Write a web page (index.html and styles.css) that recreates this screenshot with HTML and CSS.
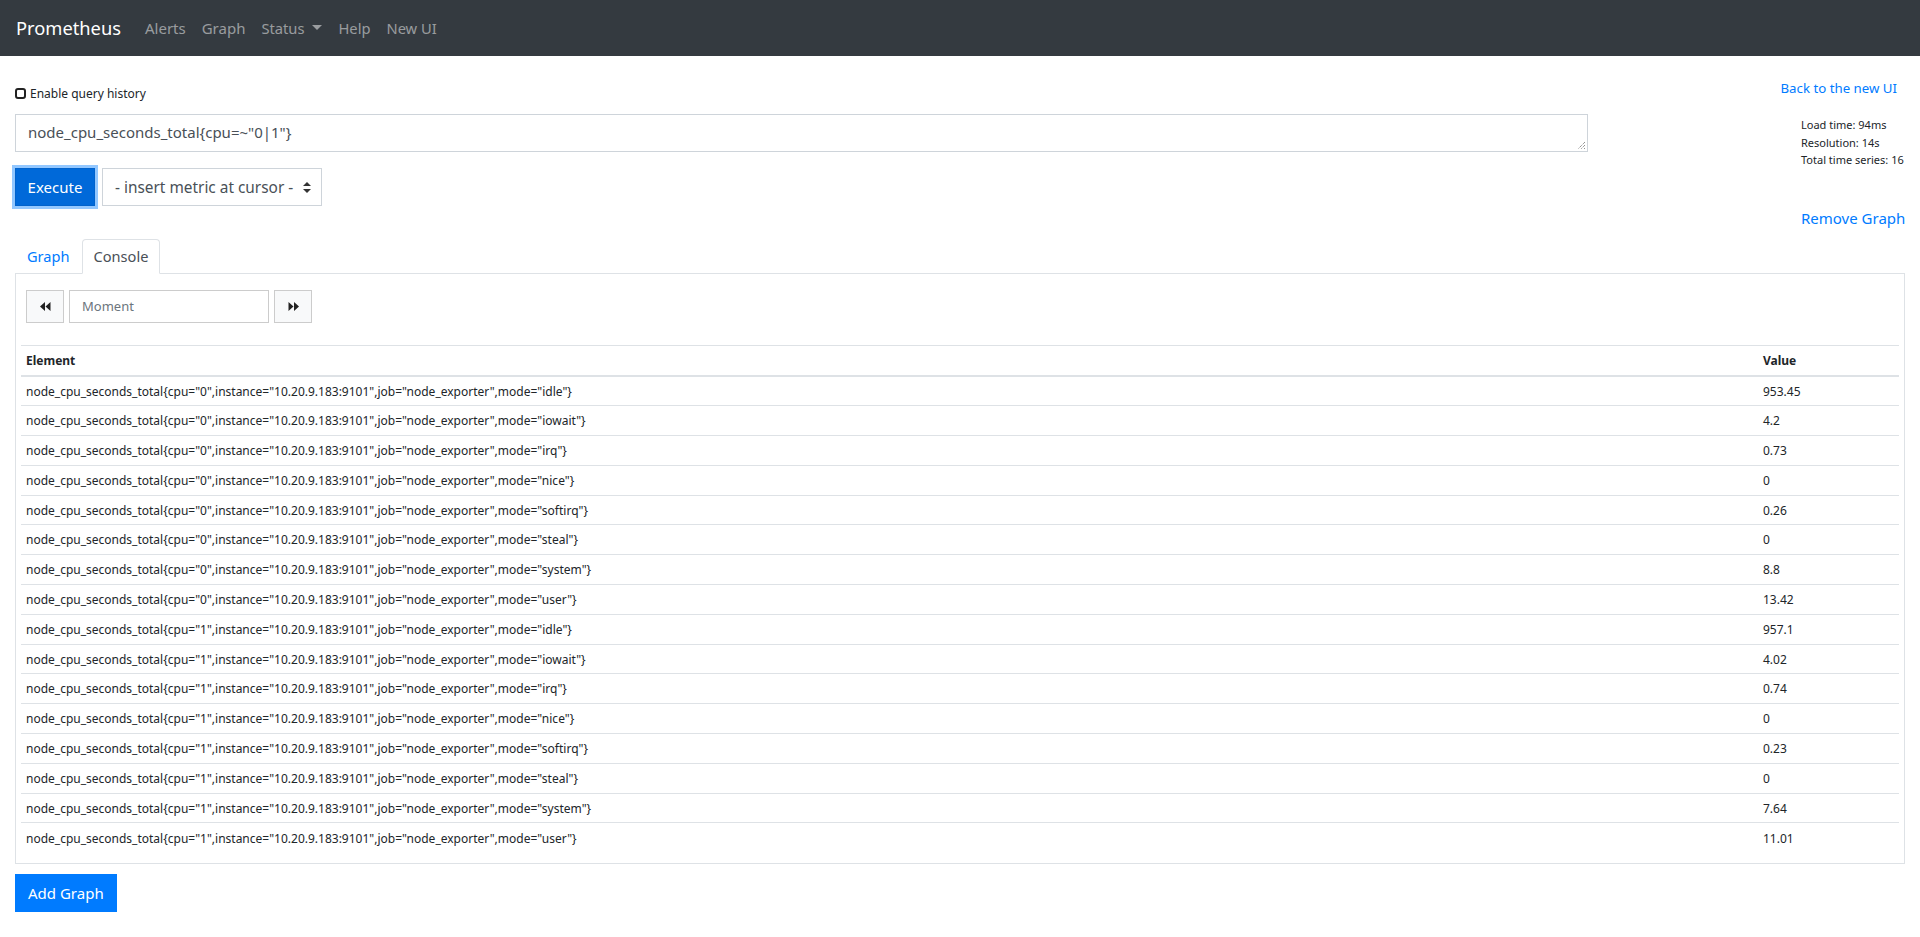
FILE: index.html
```html
<!DOCTYPE html>
<html>
<head>
<meta charset="utf-8">
<title>Prometheus Time Series Collection and Processing Server</title>
<link rel="stylesheet" href="styles.css">
</head>
<body>
<nav class="navbar">
  <a class="brand" href="#">Prometheus</a>
  <a class="nav-link" href="#">Alerts</a>
  <a class="nav-link" href="#">Graph</a>
  <a class="nav-link" href="#">Status <span class="caret"></span></a>
  <a class="nav-link" href="#">Help</a>
  <a class="nav-link" href="#">New UI</a>
</nav>

<main class="container">
  <div class="top-row">
    <div class="query-col">
      <label class="history"><span class="checkbox"></span>Enable query history</label>
      <div class="expr">node_cpu_seconds_total{cpu=~"0|1"}<svg class="grip" width="9" height="9" viewBox="0 0 9 9"><path d="M8 1 L1 8 M8 4 L4 8 M8 7 L7 8" stroke="#666" stroke-width="1" stroke-dasharray="1 1"/></svg></div>
      <div class="exec-row">
        <button class="btn-exec">Execute</button>
        <div class="metric-select"><span>- insert metric at cursor -</span><svg class="updown" width="8" height="11" viewBox="0 0 8 11"><path d="M4 0 L8 4 L0 4 Z M0 7 L8 7 L4 11 Z" fill="#333"/></svg></div>
      </div>
    </div>
    <div class="side-col">
      <a class="back-link" href="#">Back to the new UI</a>
      <div class="stats">
        <div>Load time: 94ms</div>
        <div>Resolution: 14s</div>
        <div>Total time series: 16</div>
      </div>
      <a class="remove-link" href="#">Remove Graph</a>
    </div>
  </div>

  <div class="tabs">
    <a class="tab" href="#">Graph</a>
    <a class="tab active" href="#">Console</a>
  </div>
  <div class="panel">
    <div class="moment-row">
      <button class="btn-step"><svg width="11" height="9" viewBox="0 0 11 9"><path d="M5 0 L5 9 L0 4.5 Z M10.5 0 L10.5 9 L5.5 4.5 Z" fill="#222"/></svg></button>
      <div class="moment-input">Moment</div>
      <button class="btn-step"><svg width="11" height="9" viewBox="0 0 11 9"><path d="M0.5 0 L0.5 9 L5.5 4.5 Z M6 0 L6 9 L11 4.5 Z" fill="#222"/></svg></button>
    </div>
    <table class="results">
      <thead>
        <tr><th>Element</th><th class="val">Value</th></tr>
      </thead>
      <tbody>
        <tr><td>node_cpu_seconds_total{cpu="0",instance="10.20.9.183:9101",job="node_exporter",mode="idle"}</td><td>953.45</td></tr>
        <tr><td>node_cpu_seconds_total{cpu="0",instance="10.20.9.183:9101",job="node_exporter",mode="iowait"}</td><td>4.2</td></tr>
        <tr><td>node_cpu_seconds_total{cpu="0",instance="10.20.9.183:9101",job="node_exporter",mode="irq"}</td><td>0.73</td></tr>
        <tr><td>node_cpu_seconds_total{cpu="0",instance="10.20.9.183:9101",job="node_exporter",mode="nice"}</td><td>0</td></tr>
        <tr><td>node_cpu_seconds_total{cpu="0",instance="10.20.9.183:9101",job="node_exporter",mode="softirq"}</td><td>0.26</td></tr>
        <tr><td>node_cpu_seconds_total{cpu="0",instance="10.20.9.183:9101",job="node_exporter",mode="steal"}</td><td>0</td></tr>
        <tr><td>node_cpu_seconds_total{cpu="0",instance="10.20.9.183:9101",job="node_exporter",mode="system"}</td><td>8.8</td></tr>
        <tr><td>node_cpu_seconds_total{cpu="0",instance="10.20.9.183:9101",job="node_exporter",mode="user"}</td><td>13.42</td></tr>
        <tr><td>node_cpu_seconds_total{cpu="1",instance="10.20.9.183:9101",job="node_exporter",mode="idle"}</td><td>957.1</td></tr>
        <tr><td>node_cpu_seconds_total{cpu="1",instance="10.20.9.183:9101",job="node_exporter",mode="iowait"}</td><td>4.02</td></tr>
        <tr><td>node_cpu_seconds_total{cpu="1",instance="10.20.9.183:9101",job="node_exporter",mode="irq"}</td><td>0.74</td></tr>
        <tr><td>node_cpu_seconds_total{cpu="1",instance="10.20.9.183:9101",job="node_exporter",mode="nice"}</td><td>0</td></tr>
        <tr><td>node_cpu_seconds_total{cpu="1",instance="10.20.9.183:9101",job="node_exporter",mode="softirq"}</td><td>0.23</td></tr>
        <tr><td>node_cpu_seconds_total{cpu="1",instance="10.20.9.183:9101",job="node_exporter",mode="steal"}</td><td>0</td></tr>
        <tr><td>node_cpu_seconds_total{cpu="1",instance="10.20.9.183:9101",job="node_exporter",mode="system"}</td><td>7.64</td></tr>
        <tr><td>node_cpu_seconds_total{cpu="1",instance="10.20.9.183:9101",job="node_exporter",mode="user"}</td><td>11.01</td></tr>
      </tbody>
    </table>
  </div>
  <button class="btn-add">Add Graph</button>
</main>
</body>
</html>
```

FILE: styles.css
```css
* { box-sizing: border-box; }
body {
  margin: 0;
  font-family: "Noto Sans", "Open Sans", sans-serif;
  color: #212529;
  background: #fff;
}
a { text-decoration: none; }

.navbar {
  height: 56px;
  background: #343a40;
  display: flex;
  align-items: center;
  padding: 0 16px 1px 16px;
}
.brand {
  color: #fff;
  font-size: 18.3px;
  margin-right: 16px;
}
.nav-link {
  color: rgba(255,255,255,.5);
  font-size: 15px;
  padding: 0 8px;
  display: flex;
  align-items: center;
}
.nav-link:nth-child(n+4) { font-size: 14.7px; }
.caret {
  display: inline-block;
  margin-left: 8px;
  border-top: 5px solid rgba(255,255,255,.5);
  border-left: 5px solid transparent;
  border-right: 5px solid transparent;
}

.container { padding: 0 15px; }

.top-row { display: flex; }
.query-col { flex: 1; }
.side-col {
  width: 317px;
  display: flex;
  flex-direction: column;
  align-items: flex-end;
}

.history {
  display: flex;
  align-items: center;
  margin-top: 28px;
  height: 18px;
  font-size: 12px;
}
.checkbox {
  width: 11px;
  height: 11px;
  border: 2px solid #222;
  border-radius: 3px;
  margin-right: 4px;
}
.expr {
  position: relative;
  margin-top: 12px;
  height: 38px;
  border: 1px solid #ced4da;
  padding: 7px 12px;
  font-size: 15px;
  color: #495057;
}
.grip { position: absolute; right: 1px; bottom: 1px; }
.exec-row {
  display: flex;
  margin-top: 16px;
  gap: 7px;
}
.btn-exec {
  height: 38px;
  width: 80px;
  font-family: inherit;
  font-size: 15px;
  color: #fff;
  background: #0069d9;
  border: 1px solid #0062cc;
  box-shadow: 0 0 0 3px rgba(38,143,255,.5);
}
.metric-select {
  height: 38px;
  width: 220px;
  border: 1px solid #ced4da;
  display: flex;
  align-items: center;
  justify-content: space-between;
  padding: 0 10px 0 12px;
  font-size: 15.4px;
  color: #495057;
  white-space: nowrap;
}

.back-link {
  color: #007bff;
  font-size: 13.25px;
  margin-top: 23px;
  margin-right: 8px;
  line-height: 18px;
}
.stats {
  align-self: flex-end;
  width: 104px;
  margin-top: 19px;
  font-size: 11px;
  line-height: 17.5px;
}
.remove-link {
  align-self: flex-end;
  width: 104px;
  color: #007bff;
  font-size: 15px;
  margin-top: 38px;
  line-height: 22px;
  white-space: nowrap;
}

.tabs {
  display: flex;
  margin-top: 10px;
  height: 35px;
  border-bottom: 1px solid #dee2e6;
}
.tab {
  padding: 0 11px;
  display: flex;
  align-items: center;
  color: #007bff;
  font-size: 14.6px;
  border: 1px solid transparent;
  border-top-left-radius: 4px;
  border-top-right-radius: 4px;
}
.tab.active {
  color: #495057;
  border-color: #dee2e6 #dee2e6 #fff;
  margin-bottom: -1px;
  background: #fff;
}

.panel {
  border: 1px solid #dee2e6;
  border-top: none;
  padding: 16px 5px 10px;
}
.moment-row {
  display: flex;
  gap: 5px;
  margin-left: 5px;
  height: 33px;
}
.btn-step {
  width: 38px;
  height: 33px;
  background: #f8f9fa;
  border: 1px solid #ccc;
  display: flex;
  align-items: center;
  justify-content: center;
}
.moment-input {
  width: 200px;
  border: 1px solid #ccc;
  display: flex;
  align-items: center;
  padding: 0 12px;
  font-size: 13px;
  color: #6c757d;
}

.results {
  width: 100%;
  border-collapse: collapse;
  margin-top: 22px;
  font-size: 12px;
}
.results th {
  text-align: left;
  font-weight: 700;
  height: 31px;
  padding: 0 5px;
  border-top: 1px solid #dee2e6;
  border-bottom: 2px solid #dee2e6;
}
.results td {
  height: 29.8px;
  padding: 0 5px;
  border-top: 1px solid #dee2e6;
}
.results .val { width: 141px; }

.btn-add {
  margin-top: 10px;
  height: 38px;
  padding: 0 12px;
  font-family: inherit;
  font-size: 15px;
  color: #fff;
  background: #007bff;
  border: 1px solid #007bff;
}
```
